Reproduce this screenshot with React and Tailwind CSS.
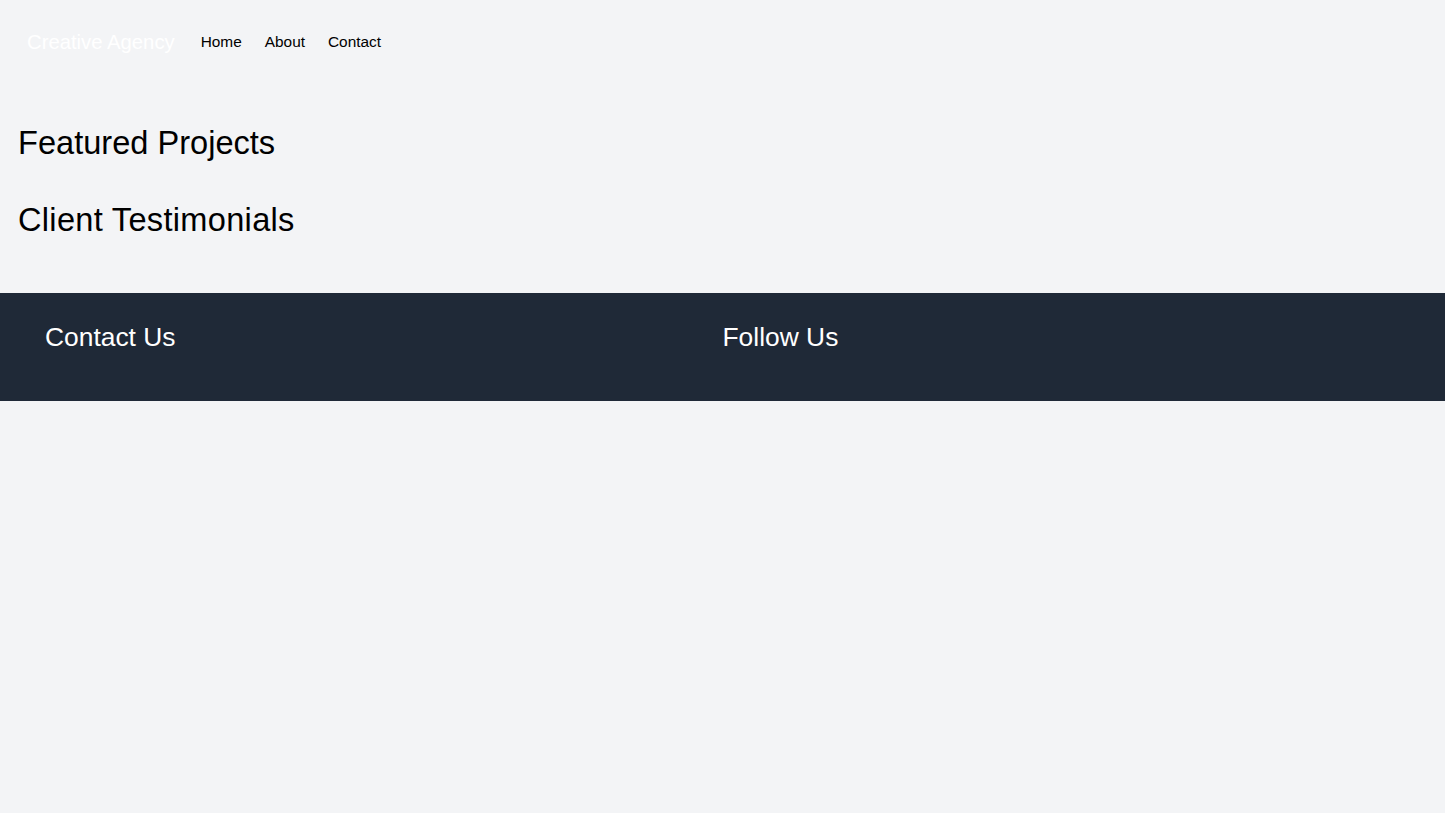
import React from "react";

export default function App() {
  return (
    <div
      className="min-h-[813px] bg-[#f3f4f6] text-black"
      style={{ fontFamily: '"Liberation Sans", Arial, sans-serif' }}
    >
      <nav className="flex items-center px-[27px] pt-[28px] pb-[28px]">
        <span className="text-[20.3px] leading-7 text-white mr-[26px]">Creative Agency</span>
        <div className="flex items-center gap-[23px] text-[15.4px] leading-6">
          <a href="#">Home</a>
          <a href="#">About</a>
          <a href="#">Contact</a>
        </div>
      </nav>

      <main className="px-[18px] pt-[41px] pb-[55px]">
        <section className="mb-[41px]">
          <h2 className="text-[32.6px] leading-9">Featured Projects</h2>
        </section>
        <section>
          <h2 className="text-[32.6px] leading-9 tracking-[0.3px]">Client Testimonials</h2>
        </section>
      </main>

      <footer className="bg-[#1f2937] text-white px-[45px] pt-[28px] pb-[48px]">
        <div className="grid grid-cols-2">
          <div>
            <h3 className="text-[26.4px] leading-8">Contact Us</h3>
          </div>
          <div>
            <h3 className="text-[26.4px] leading-8">Follow Us</h3>
          </div>
        </div>
      </footer>
    </div>
  );
}
